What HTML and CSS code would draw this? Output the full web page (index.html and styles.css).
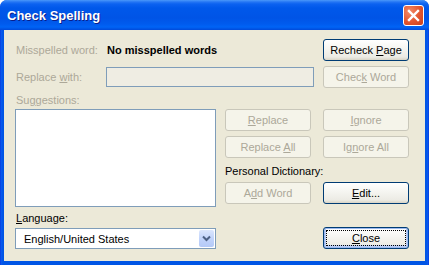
FILE: index.html
```html
<!DOCTYPE html>
<html lang="en">
<head>
    <meta charset="UTF-8">
    <title>Check Spelling</title>
    <link rel="stylesheet" href="styles.css">
</head>
<body>

    <div class="window">
      <!-- Title bar -->
      <div class="titlebar">
        <span class="title">Check Spelling</span>
        <div class="close-x">
          <svg width="13" height="13" viewBox="0 0 13 13">
            <path d="M2 2 L11 11 M11 2 L2 11" stroke="#fff" stroke-width="2.4" stroke-linecap="square"/>
          </svg>
        </div>
      </div>

      <!-- Dialog body -->
      <div class="client">
        <div class="row row-word">
          <span class="label off">Misspelled word:</span>
          <span class="word">No misspelled words</span>
          <button class="btn">Recheck <u>P</u>age</button>
        </div>

        <div class="row row-replace">
          <span class="label off">Replace <u>w</u>ith:</span>
          <div class="textbox"></div>
          <button class="btn" disabled>Chec<u>k</u> Word</button>
        </div>

        <div class="main">
          <div class="sugg-label off">Su<u>g</u>gestions:</div>
          <div class="listbox"></div>

          <button class="btn b-replace" disabled><u>R</u>eplace</button>
          <button class="btn b-ignore" disabled><u>I</u>gnore</button>
          <button class="btn b-replace-all" disabled>Replace <u>A</u>ll</button>
          <button class="btn b-ignore-all" disabled>Ig<u>n</u>ore All</button>

          <div class="dict-label">Personal Dictionary:</div>
          <button class="btn b-add" disabled>A<u>d</u>d Word</button>
          <button class="btn b-edit"><u>E</u>dit...</button>

          <div class="lang-label"><u>L</u>anguage:</div>
          <div class="select">
            <span>English/United States</span>
            <div class="drop">
              <svg width="9" height="7" viewBox="0 0 9 7">
                <path d="M1 1.5 L4.5 5 L8 1.5" stroke="#4d6185" stroke-width="2" fill="none"/>
              </svg>
            </div>
          </div>
          <button class="btn btn-default b-close"><u>C</u>lose</button>
        </div>
      </div>
    </div>

</body>
</html>
```

FILE: styles.css
```css
/* Global */
body { margin: 0; background: #fff; font-family: "Liberation Sans", Arial, sans-serif; font-size: 11px; }
u { text-decoration: underline; text-underline-offset: 1px; }

/* Window frame */
.window {
    width: 429px;
    height: 265px;
    display: flex;
    flex-direction: column;
    background: linear-gradient(to right, #0831d9 0, #0a5af0 1px, #0055e5 3px, #0055e5 426px, #0a5af0 428px, #0831d9 429px);
    border-radius: 7px 7px 0 0;
    overflow: hidden;
}

.titlebar {
    height: 30px;
    flex: none;
    display: flex;
    align-items: center;
    padding: 0 5px 0 7px;
    background: linear-gradient(to bottom, #4a98fa 0, #2475f4 2px, #0c62f0 4px, #0058ea 8px, #0054e6 18px, #005bee 24px, #0064f6 27px, #004ada 30px);
}
.title {
    flex: 1;
    color: #fff;
    font-weight: bold;
    font-size: 13px;
    padding-top: 1px;
    text-shadow: 1px 1px 0 #0a1e8a;
}
.close-x {
    width: 19px;
    height: 19px;
    border: 1px solid #fff;
    border-radius: 3px;
    background: radial-gradient(circle at 30% 30%, #f28a68 0, #e2552f 55%, #c8401c 100%);
    display: flex;
    align-items: center;
    justify-content: center;
    margin-top: 1px;
}

.client {
    flex: 1;
    margin: 0 4px 4px;
    background: #ece9d8;
    padding: 9px 16px 0 11px;
}

/* Rows on top */
.row { display: flex; align-items: center; }
.row-word { height: 22px; }
.row-replace { height: 21px; margin-top: 5px; }
.label { width: 90px; padding-left: 1px; }
.word { font-weight: bold; margin-left: 1px; }
.off { color: #aca899; }
.row .btn { margin-left: auto; }

.textbox {
    width: 206px;
    height: 18px;
    border: 1px solid #7f9db9;
    background: #efede3;
}

/* Buttons */
.btn {
    width: 86px;
    height: 22px;
    padding: 0;
    font-family: inherit;
    font-size: 11px;
    color: #000;
    border: 1px solid #003c74;
    border-radius: 3px;
    background: linear-gradient(to bottom, #ffffff 0, #f6f6f2 40%, #ecebe4 85%, #d8d4c6 100%);
}
.btn:disabled {
    color: #aca899;
    border-color: #c9c7ba;
    background: #f5f4ea;
}
.btn-default {
    box-shadow: inset 0 0 0 1px #9cb9ef, inset 0 -1px 0 2px #bcd0f6;
    outline: 1px dotted #000;
    outline-offset: -4px;
}

/* Main grid */
.main {
    display: grid;
    grid-template-columns: 201px 86px 86px;
    grid-template-rows: 16px 27px 22px 24px 25px 20px 22px;
    column-gap: 9px;
    margin-top: 6px;
}
.main .btn { align-self: start; }
.b-ignore, .b-ignore-all, .b-edit, .b-close { margin-left: 3px; }

.sugg-label { grid-column: 1; grid-row: 1; padding-left: 1px; padding-top: 1px; }
.listbox {
    grid-column: 1;
    grid-row: 2 / 6;
    height: 96px;
    border: 1px solid #7f9db9;
    background: #fff;
}
.b-replace { grid-column: 2; grid-row: 2; }
.b-ignore { grid-column: 3; grid-row: 2; }
.b-replace-all { grid-column: 2; grid-row: 3; }
.b-ignore-all { grid-column: 3; grid-row: 3; }
.dict-label { grid-column: 2 / 4; grid-row: 4; padding-top: 7px; }
.b-add { grid-column: 2; grid-row: 5; }
.b-edit { grid-column: 3; grid-row: 5; }

.lang-label { grid-column: 1; grid-row: 6; padding-left: 1px; padding-top: 5px; }
.select {
    grid-column: 1;
    grid-row: 7;
    margin-top: 1px;
    height: 19px;
    border: 1px solid #7f9db9;
    background: #fff;
    display: flex;
    align-items: center;
    padding-left: 8px;
}
.select span { flex: 1; }
.drop {
    width: 15px;
    height: 17px;
    margin-right: 1px;
    border-radius: 2px;
    background: linear-gradient(to bottom, #dbe6fd 0, #c2d4fb 50%, #b4c9f7 100%);
    display: flex;
    align-items: center;
    justify-content: center;
}
.b-close { grid-column: 3; grid-row: 7; }
```
